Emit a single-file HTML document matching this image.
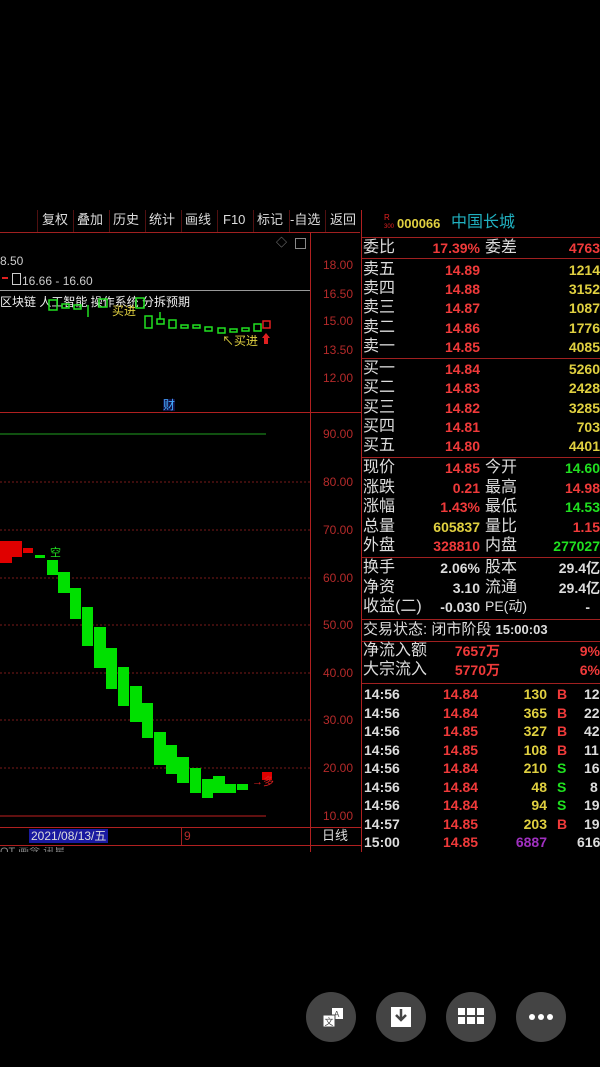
<!DOCTYPE html>
<html><head><meta charset="utf-8"><style>
body{margin:0;width:600px;height:1067px;background:#000;position:relative;overflow:hidden;font-family:"Liberation Sans","Noto Sans CJK SC",sans-serif;}
.a{position:absolute;white-space:nowrap;line-height:1;}
.h{position:absolute;height:1px;}
.v{position:absolute;width:1px;}
.m{color:#ddd;font-size:13px;top:213px;}
.ax{color:#b52a2a;font-size:12px;left:323px;}
.lb{color:#ddd;font-size:16px;left:363px;}
.r{color:#f03a3a;font-weight:bold;font-size:14px;}
.y{color:#e0d040;font-weight:bold;font-size:14px;}
.g{color:#20e020;font-weight:bold;font-size:14px;}
.w{color:#ddd;font-weight:bold;font-size:14px;}
.gb{position:absolute;background:#00e000;}
.rb{position:absolute;background:#e00000;}
.btn{position:absolute;width:50px;height:50px;border-radius:50%;background:#444;top:992px;}
</style></head><body>
<div class="h" style="left:0;top:232px;width:360px;background:#a02020"></div>
<div class="a m" style="left:42px">复权</div><div class="a m" style="left:77px">叠加</div><div class="a m" style="left:113px">历史</div><div class="a m" style="left:149px">统计</div><div class="a m" style="left:185px">画线</div><div class="a m" style="left:223px">F10</div><div class="a m" style="left:257px">标记</div><div class="a m" style="left:290px">-自选</div><div class="a m" style="left:330px">返回</div>
<div class="v" style="left:37px;top:210px;height:22px;background:#501010"></div><div class="v" style="left:73px;top:210px;height:22px;background:#501010"></div><div class="v" style="left:109px;top:210px;height:22px;background:#501010"></div><div class="v" style="left:145px;top:210px;height:22px;background:#501010"></div><div class="v" style="left:181px;top:210px;height:22px;background:#501010"></div><div class="v" style="left:217px;top:210px;height:22px;background:#501010"></div><div class="v" style="left:253px;top:210px;height:22px;background:#501010"></div><div class="v" style="left:289px;top:210px;height:22px;background:#501010"></div><div class="v" style="left:325px;top:210px;height:22px;background:#501010"></div>
<div class="v" style="left:310px;top:232px;height:620px;background:#b02020"></div>
<div class="v" style="left:361px;top:210px;height:642px;background:#b02020"></div>
<div class="h" style="left:0;top:412px;width:361px;background:#b02020"></div>
<div class="h" style="left:0;top:827px;width:361px;background:#b02020"></div>
<div class="h" style="left:0;top:845px;width:361px;background:#b02020"></div>
<div class="a" style="left:276px;top:238px;color:#888;font-size:11px">◇</div>
<div class="a" style="left:295px;top:238px;width:9px;height:9px;border:1px solid #888"></div>
<div class="a ax" style="top:259px">18.00</div><div class="a ax" style="top:288px">16.50</div><div class="a ax" style="top:315px">15.00</div><div class="a ax" style="top:344px">13.50</div><div class="a ax" style="top:372px">12.00</div>
<div class="h" style="left:0;top:290px;width:310px;background:#999"></div>
<div class="a" style="left:0;top:255px;color:#ccc;font-size:12px">8.50</div>
<div class="a" style="left:22px;top:275px;color:#ccc;font-size:12px">16.66 - 16.60</div>
<div class="a" style="left:12px;top:273px;width:7px;height:10px;border:1px solid #ccc"></div>
<div class="a" style="left:0;top:296px;color:#eee;font-size:12px">区块链 人工智能 操作系统 分拆预期</div>
<svg class="a" style="left:0;top:265px" width="310" height="80">
<g fill="none" stroke="#20e020" stroke-width="1.5">
<rect x="49" y="35" width="8" height="10"/><rect x="62" y="39" width="7" height="4"/><rect x="74" y="40" width="7" height="4"/><rect x="99" y="34" width="8" height="8"/><rect x="136" y="33" width="8" height="10"/>
<rect x="145" y="51" width="7" height="12"/><rect x="157" y="54" width="7" height="5"/><rect x="169" y="55" width="7" height="8"/><line x1="88" y1="40" x2="88" y2="52"/><line x1="160" y1="47" x2="160" y2="54"/>
<rect x="181" y="60" width="7" height="3"/><rect x="193" y="60" width="7" height="3"/><rect x="205" y="62" width="7" height="4"/><rect x="218" y="63" width="7" height="5"/><rect x="230" y="64" width="7" height="3"/><rect x="242" y="63" width="7" height="3"/><rect x="254" y="59" width="7" height="7"/>
</g>
<rect x="263" y="56" width="7" height="7" fill="none" stroke="#e02020" stroke-width="1.5"/>
<path d="M262 73l4-5 4 5h-2v6h-4v-6z" fill="#e02020"/>
<rect x="2" y="12" width="6" height="2" fill="#e02020"/>
</svg>
<div class="a" style="left:112px;top:305px;color:#e0d040;font-size:12px">买进</div>
<div class="a" style="left:222px;top:335px;color:#e0d040;font-size:12px">↖买进</div>
<div class="a" style="left:163px;top:399px;color:#4af;font-size:12px;background:#114">财</div>
<svg class="a" style="left:0;top:412px" width="310" height="415">
<g stroke="#7a1a1a" stroke-dasharray="2,2"><line x1="0" y1="70" x2="310" y2="70"/><line x1="0" y1="118" x2="310" y2="118"/><line x1="0" y1="166" x2="310" y2="166"/><line x1="0" y1="213" x2="310" y2="213"/><line x1="0" y1="261" x2="310" y2="261"/><line x1="0" y1="308" x2="310" y2="308"/><line x1="0" y1="356" x2="310" y2="356"/></g>
<line x1="0" y1="22" x2="266" y2="22" stroke="#20a020"/><line x1="0" y1="404" x2="266" y2="404" stroke="#c02020"/>
</svg>
<div class="a ax" style="top:428px">90.00</div><div class="a ax" style="top:476px">80.00</div><div class="a ax" style="top:524px">70.00</div><div class="a ax" style="top:572px">60.00</div><div class="a ax" style="top:619px">50.00</div><div class="a ax" style="top:667px">40.00</div><div class="a ax" style="top:714px">30.00</div><div class="a ax" style="top:762px">20.00</div><div class="a ax" style="top:810px">10.00</div>
<div class="rb" style="left:0;top:541px;width:12px;height:22px"></div><div class="rb" style="left:12px;top:541px;width:10px;height:16px"></div><div class="rb" style="left:23px;top:548px;width:10px;height:5px"></div>
<div class="gb" style="left:35px;top:555px;width:10px;height:3px"></div>
<div class="gb" style="left:47px;top:560px;width:11px;height:15px"></div><div class="gb" style="left:58px;top:572px;width:12px;height:21px"></div><div class="gb" style="left:70px;top:588px;width:11px;height:31px"></div><div class="gb" style="left:82px;top:607px;width:11px;height:39px"></div><div class="gb" style="left:94px;top:627px;width:12px;height:41px"></div><div class="gb" style="left:106px;top:648px;width:11px;height:41px"></div><div class="gb" style="left:118px;top:667px;width:11px;height:39px"></div><div class="gb" style="left:130px;top:686px;width:12px;height:36px"></div><div class="gb" style="left:142px;top:703px;width:11px;height:35px"></div>
<div class="gb" style="left:154px;top:732px;width:12px;height:33px"></div><div class="gb" style="left:166px;top:745px;width:11px;height:29px"></div><div class="gb" style="left:177px;top:757px;width:12px;height:26px"></div><div class="gb" style="left:190px;top:768px;width:11px;height:25px"></div><div class="gb" style="left:202px;top:779px;width:11px;height:19px"></div><div class="gb" style="left:213px;top:776px;width:12px;height:17px"></div><div class="gb" style="left:225px;top:784px;width:11px;height:9px"></div><div class="gb" style="left:237px;top:784px;width:11px;height:6px"></div>
<div class="rb" style="left:262px;top:772px;width:10px;height:8px"></div>
<div class="a" style="left:50px;top:548px;color:#20e020;font-size:11px">空</div>
<div class="a" style="left:252px;top:777px;color:#e02020;font-size:11px">→多</div>
<div class="a" style="left:29px;top:829px;background:#1a1aa0;color:#ddd;font-size:12px;padding:1px 2px">2021/08/13/五</div>
<div class="v" style="left:181px;top:828px;height:17px;background:#a02020"></div>
<div class="a" style="left:184px;top:830px;color:#b52a2a;font-size:12px">9</div>
<div class="a" style="left:322px;top:829px;color:#ddd;font-size:13px">日线</div>
<div class="a" style="left:0;top:847px;color:#888;font-size:11px;height:5px;overflow:hidden">OT 画念 讯星</div>
<div class="a" style="left:384px;top:214px;color:#e02020;font-size:8px;line-height:8px">R<br><span style="font-size:6px">300</span></div>
<div class="a" style="left:397px;top:217px;color:#e0d040;font-size:13px;font-weight:bold">000066</div>
<div class="a" style="left:451px;top:215px;color:#20b0c0;font-size:16px">中国长城</div>
<div class="h" style="left:362px;top:237px;width:238px;background:#a02020"></div>
<div class="h" style="left:362px;top:258px;width:238px;background:#a02020"></div>
<div class="h" style="left:362px;top:358px;width:238px;background:#a02020"></div>
<div class="h" style="left:362px;top:457px;width:238px;background:#a02020"></div>
<div class="h" style="left:362px;top:557px;width:238px;background:#a02020"></div>
<div class="h" style="left:362px;top:619px;width:238px;background:#a02020"></div>
<div class="h" style="left:362px;top:641px;width:238px;background:#a02020"></div>
<div class="h" style="left:362px;top:683px;width:238px;background:#a02020"></div>
<div style="position:absolute;left:0;top:0;width:600px">
<div class="a lb" style="top:240px">委比</div><div class="a r" style="right:120px;top:241px">17.39%</div><div class="a lb" style="left:485px;top:240px">委差</div><div class="a r" style="right:0;top:241px">4763</div>
<div class="a lb" style="top:262px">卖五</div><div class="a r" style="right:120px;top:263px">14.89</div><div class="a y" style="right:0;top:263px">1214</div>
<div class="a lb" style="top:281px">卖四</div><div class="a r" style="right:120px;top:282px">14.88</div><div class="a y" style="right:0;top:282px">3152</div>
<div class="a lb" style="top:300px">卖三</div><div class="a r" style="right:120px;top:301px">14.87</div><div class="a y" style="right:0;top:301px">1087</div>
<div class="a lb" style="top:320px">卖二</div><div class="a r" style="right:120px;top:321px">14.86</div><div class="a y" style="right:0;top:321px">1776</div>
<div class="a lb" style="top:339px">卖一</div><div class="a r" style="right:120px;top:340px">14.85</div><div class="a y" style="right:0;top:340px">4085</div>
<div class="a lb" style="top:361px">买一</div><div class="a r" style="right:120px;top:362px">14.84</div><div class="a y" style="right:0;top:362px">5260</div>
<div class="a lb" style="top:380px">买二</div><div class="a r" style="right:120px;top:381px">14.83</div><div class="a y" style="right:0;top:381px">2428</div>
<div class="a lb" style="top:400px">买三</div><div class="a r" style="right:120px;top:401px">14.82</div><div class="a y" style="right:0;top:401px">3285</div>
<div class="a lb" style="top:419px">买四</div><div class="a r" style="right:120px;top:420px">14.81</div><div class="a y" style="right:0;top:420px">703</div>
<div class="a lb" style="top:438px">买五</div><div class="a r" style="right:120px;top:439px">14.80</div><div class="a y" style="right:0;top:439px">4401</div>
<div class="a lb" style="top:460px">现价</div><div class="a r" style="right:120px;top:461px">14.85</div><div class="a lb" style="left:485px;top:460px">今开</div><div class="a g" style="right:0;top:461px">14.60</div>
<div class="a lb" style="top:480px">涨跌</div><div class="a r" style="right:120px;top:481px">0.21</div><div class="a lb" style="left:485px;top:480px">最高</div><div class="a r" style="right:0;top:481px">14.98</div>
<div class="a lb" style="top:499px">涨幅</div><div class="a r" style="right:120px;top:500px">1.43%</div><div class="a lb" style="left:485px;top:499px">最低</div><div class="a g" style="right:0;top:500px">14.53</div>
<div class="a lb" style="top:519px">总量</div><div class="a y" style="right:120px;top:520px">605837</div><div class="a lb" style="left:485px;top:519px">量比</div><div class="a r" style="right:0;top:520px">1.15</div>
<div class="a lb" style="top:538px">外盘</div><div class="a r" style="right:120px;top:539px">328810</div><div class="a lb" style="left:485px;top:538px">内盘</div><div class="a g" style="right:0;top:539px">277027</div>
<div class="a lb" style="top:560px">换手</div><div class="a w" style="right:120px;top:561px">2.06%</div><div class="a lb" style="left:485px;top:560px">股本</div><div class="a w" style="right:0;top:561px">29.4亿</div>
<div class="a lb" style="top:580px">净资</div><div class="a w" style="right:120px;top:581px">3.10</div><div class="a lb" style="left:485px;top:580px">流通</div><div class="a w" style="right:0;top:581px">29.4亿</div>
<div class="a lb" style="top:599px">收益(二)</div><div class="a w" style="right:120px;top:600px">-0.030</div><div class="a lb" style="left:485px;top:599px;font-size:14px">PE(动)</div><div class="a w" style="right:10px;top:600px">-</div>
<div class="a lb" style="top:622px;font-size:15px">交易状态: 闭市阶段 <span style="font-size:13px;font-weight:bold">15:00:03</span></div>
<div class="a lb" style="top:643px">净流入额</div><div class="a r" style="right:100px;top:644px">7657万</div><div class="a r" style="right:0;top:644px">9%</div>
<div class="a lb" style="top:662px">大宗流入</div><div class="a r" style="right:100px;top:663px">5770万</div><div class="a r" style="right:0;top:663px">6%</div>
</div>
<div style="position:absolute;left:0;top:0;width:600px">
<div class="a w" style="left:364px;top:687px">14:56</div><div class="a r" style="left:443px;top:687px">14.84</div><div class="a y" style="right:53px;top:687px">130</div><div class="a r" style="left:557px;top:687px">B</div><div class="a w" style="left:584px;top:687px">12</div>
<div class="a w" style="left:364px;top:706px">14:56</div><div class="a r" style="left:443px;top:706px">14.84</div><div class="a y" style="right:53px;top:706px">365</div><div class="a r" style="left:557px;top:706px">B</div><div class="a w" style="left:584px;top:706px">22</div>
<div class="a w" style="left:364px;top:724px">14:56</div><div class="a r" style="left:443px;top:724px">14.85</div><div class="a y" style="right:53px;top:724px">327</div><div class="a r" style="left:557px;top:724px">B</div><div class="a w" style="left:584px;top:724px">42</div>
<div class="a w" style="left:364px;top:743px">14:56</div><div class="a r" style="left:443px;top:743px">14.85</div><div class="a y" style="right:53px;top:743px">108</div><div class="a r" style="left:557px;top:743px">B</div><div class="a w" style="left:584px;top:743px">11</div>
<div class="a w" style="left:364px;top:761px">14:56</div><div class="a r" style="left:443px;top:761px">14.84</div><div class="a y" style="right:53px;top:761px">210</div><div class="a g" style="left:557px;top:761px">S</div><div class="a w" style="left:584px;top:761px">16</div>
<div class="a w" style="left:364px;top:780px">14:56</div><div class="a r" style="left:443px;top:780px">14.84</div><div class="a y" style="right:53px;top:780px">48</div><div class="a g" style="left:557px;top:780px">S</div><div class="a w" style="left:590px;top:780px">8</div>
<div class="a w" style="left:364px;top:798px">14:56</div><div class="a r" style="left:443px;top:798px">14.84</div><div class="a y" style="right:53px;top:798px">94</div><div class="a g" style="left:557px;top:798px">S</div><div class="a w" style="left:584px;top:798px">19</div>
<div class="a w" style="left:364px;top:817px">14:57</div><div class="a r" style="left:443px;top:817px">14.85</div><div class="a y" style="right:53px;top:817px">203</div><div class="a r" style="left:557px;top:817px">B</div><div class="a w" style="left:584px;top:817px">19</div>
<div class="a w" style="left:364px;top:835px">15:00</div><div class="a r" style="left:443px;top:835px">14.85</div><div class="a" style="right:53px;top:835px;color:#a030c0;font-weight:bold;font-size:14px">6887</div><div class="a w" style="left:577px;top:835px">616</div>
</div>
<div class="btn" style="left:306px"><svg width="50" height="50"><rect x="26" y="16" width="11" height="11" fill="#fff"/><text x="28" y="25" font-size="8" fill="#444" font-family="Liberation Sans">A</text><rect x="17" y="23" width="12" height="12" fill="#fff" stroke="#444"/><text x="18.5" y="33" font-size="9" fill="#444" font-family="Noto Sans CJK SC">文</text></svg></div>
<div class="btn" style="left:376px"><svg width="50" height="50"><rect x="15" y="15" width="20" height="20" fill="#fff"/><path d="M25 17v10M20 23l5 5 5-5" stroke="#444" stroke-width="2.5" fill="none"/></svg></div>
<div class="btn" style="left:446px"><svg width="50" height="50" fill="#fff"><rect x="12" y="16" width="7" height="7"/><rect x="21" y="16" width="8" height="7"/><rect x="31" y="16" width="7" height="7"/><rect x="12" y="25" width="7" height="7"/><rect x="21" y="25" width="8" height="7"/><rect x="31" y="25" width="7" height="7"/></svg></div>
<div class="btn" style="left:516px"><svg width="50" height="50" fill="#fff"><circle cx="16" cy="25" r="3"/><circle cx="25" cy="25" r="3"/><circle cx="34" cy="25" r="3"/></svg></div>
</body></html>
